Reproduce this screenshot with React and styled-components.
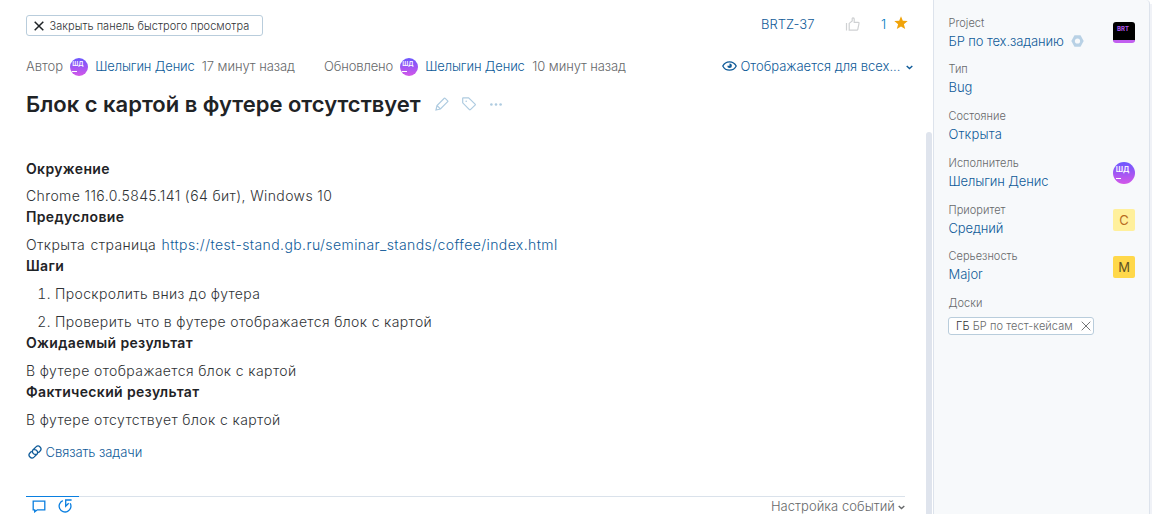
import React from "react";
import styled, { createGlobalStyle } from "styled-components";

const Global = createGlobalStyle`
  * { box-sizing: border-box; }
  body { margin: 0; background: #fff; font-family: Inter, "Liberation Sans", sans-serif; font-size: 13px; font-weight: 300; color: #66686a; overflow: hidden; }
  svg { display: block; flex: none; }
`;

const Page = styled.div`
  display: flex;
  width: 1152px;
  height: 514px;
  overflow: hidden;
`;
const Main = styled.main`
  width: 926px;
  padding: 15px 0 0 26px;
  display: flex;
  flex-direction: column;
`;
const Track = styled.div`
  width: 7px;
  padding-top: 132px;
  display: flex;
`;
const Thumb = styled.div`
  width: 6px;
  border-radius: 3px 3px 0 0;
  background: #dfe4ed;
`;
const Text = styled.span`
  white-space: nowrap;
  line-height: 20px;
  font-size: ${(p) => p.$size || 13}px;
  letter-spacing: ${(p) => p.$ls || 0}px;
  color: ${(p) => p.$color || "#66686a"};
  margin-left: ${(p) => p.$ml || 0}px;
`;
const Link = styled.a`
  white-space: nowrap;
  line-height: 20px;
  font-size: ${(p) => p.$size || 13}px;
  letter-spacing: ${(p) => p.$ls || 0}px;
  color: #0f5b99;
  text-decoration: none;
  margin-left: ${(p) => p.$ml || 0}px;
`;
const TopRow = styled.div`
  display: flex;
  height: 21px;
  align-items: flex-start;
`;
const CloseButton = styled.button`
  display: flex;
  align-items: center;
  width: 237px;
  height: 21px;
  padding: 0 0 0 7px;
  border: 1px solid #b9cddc;
  border-radius: 3px;
  background: #fff;
  font-family: inherit;
  font-weight: inherit;
`;
const TopActions = styled.div`
  display: flex;
  align-items: center;
  height: 18px;
  margin-left: 498px;
`;
const IssueId = styled.div`
  width: 84px;
`;
const MetaRow = styled.div`
  display: flex;
  align-items: center;
  height: 20px;
  margin-top: 20px;
`;
const Person = styled.div`
  display: flex;
  align-items: center;
  width: ${(p) => p.$w}px;
`;
const Visibility = styled.div`
  display: flex;
  align-items: center;
  margin-left: auto;
  width: 204px;
`;
const Avatar = styled.span`
  flex: none;
  display: flex;
  flex-direction: column;
  width: ${(p) => p.$size}px;
  height: ${(p) => p.$size}px;
  border-radius: 50%;
  overflow: hidden;
  background: linear-gradient(#6b57ff, #d457e8);
  color: #fff;
  font-weight: 600;
  font-size: ${(p) => p.$size * 0.34}px;
  line-height: 1;
  padding: ${(p) => p.$size * 0.18}px 0 0 ${(p) => p.$size * 0.12}px;
  margin-left: ${(p) => p.$ml || 0}px;
  margin-top: ${(p) => p.$mt || 0}px;
  &::after {
    content: "";
    width: ${(p) => p.$size * 0.24}px;
    height: 1px;
    margin-top: ${(p) => p.$size * 0.22}px;
    background: #fff;
  }
`;
const TitleRow = styled.div`
  display: flex;
  align-items: center;
  height: 28px;
  margin-top: 14px;
`;
const Title = styled.h1`
  margin: 0;
  width: 409px;
  font-size: 22px;
  line-height: 28px;
  font-weight: 600;
  letter-spacing: -0.01px;
  color: #1f2326;
  white-space: nowrap;
`;
const Description = styled.article`
  margin-top: 40px;
  font-size: 14px;
  line-height: 21px;
  letter-spacing: 0.39px;
  color: #303336;
  a { color: #0f5b99; letter-spacing: 0.41px; }
`;
const Heading = styled.h2`
  margin: 0;
  font-size: 14px;
  line-height: 21px;
  font-weight: 600;
  letter-spacing: 0.35px;
  color: #1f2326;
`;
const Para = styled.p`
  margin: ${(p) => (p.$first ? 6 : 7)}px 0 0;
  word-spacing: ${(p) => p.$ws || 0}px;
`;
const Steps = styled.ol`
  margin: 0;
  padding: 0 0 0 29px;
  li { margin-top: 7px; letter-spacing: 0.36px; }
`;
const LinkIssues = styled.div`
  display: flex;
  align-items: center;
  height: 20px;
  margin: 12px 0 0 2px;
`;
const Activity = styled.div`
  display: flex;
  width: 879px;
  height: 18px;
  margin-top: 34px;
  border-top: 1px solid #dae2eb;
`;
const ActivityTabs = styled.div`
  display: flex;
  gap: 12px;
  width: 53px;
  height: 18px;
  margin-top: -1px;
  padding: 2px 0 0 6px;
  border-top: 1px solid #0a7fe0;
`;
const EventSettings = styled.div`
  display: flex;
  align-items: center;
  justify-content: flex-end;
  margin-left: auto;
  height: 17px;
`;
const Sidebar = styled.aside`
  width: 217px;
  padding: 13px 14px 0 14px;
  background: #f7f9fb;
  border-left: 1px solid #dde3ec;
  border-right: 1px solid #dde3ec;
  border-top-right-radius: 4px;
`;
const Edge = styled.div`
  width: 2px;
  margin-top: 4px;
  background: #f0f2f7;
`;
const Field = styled.div`
  display: flex;
  justify-content: space-between;
  height: ${(p) => p.$h || 47}px;
`;
const FieldBody = styled.div`
  display: flex;
  flex-direction: column;
  padding-left: 0.5px;
`;
const FieldLabel = styled.span`
  font-size: 11px;
  line-height: 20px;
  height: 18px;
  white-space: nowrap;
  letter-spacing: 0.03px;
`;
const FieldValue = styled.div`
  display: flex;
  align-items: center;
  height: 20px;
`;
const Tile = styled.span`
  width: 22px;
  height: 22px;
  margin-top: ${(p) => p.$mt}px;
  border-radius: 2px;
  font-size: 13px;
  font-weight: 400;
  line-height: 22px;
  text-align: center;
  background: ${(p) => p.$bg};
  color: ${(p) => p.$color};
`;
const Logo = styled.span`
  width: 22px;
  height: 21px;
  margin-top: 9px;
  padding: 4px 0 0 4px;
  border-radius: 3px;
  background: #000;
  border-bottom: 3px solid #c25ff0;
  color: #b45cf0;
  font-size: 6px;
  font-weight: 700;
  line-height: 6px;
`;
const Chip = styled.div`
  display: flex;
  align-items: center;
  width: 146px;
  height: 18px;
  margin: 6px 0 0 -0.5px;
  padding: 0 4px 0 7px;
  border: 1px solid #b9cddc;
  border-radius: 3px;
  background: #fff;
  ${Text} { line-height: 16px; }
`;

const Cross = ({ size, color, w }) => (
  <svg width={size} height={size} viewBox="0 0 10 10" stroke={color} strokeWidth={w} fill="none"><path d="M.7.7l8.6 8.6M9.3.7L.7 9.3" /></svg>
);
const IconBox = styled.span`
  display: flex;
  margin-left: ${(p) => p.$ml || 0}px;
  margin-top: ${(p) => p.$mt || 0}px;
`;
const Caret = ({ color, ml }) => (
  <IconBox $ml={ml} $mt={3}>
    <svg width="7" height="5" viewBox="0 0 7 5" stroke={color} strokeWidth="1.4" fill="none"><path d="M.7.9l2.800 2.600L6.300.9" /></svg>
  </IconBox>
);

const fields = [
  { label: "Тип", value: "Bug", h: 47 },
  { label: "Состояние", value: "Открыта", h: 47, ls: 0.15 },
  { label: "Исполнитель", value: "Шелыгин Денис", h: 47, ls: -0.12, avatar: true },
  { label: "Приоритет", value: "Средний", h: 46, ls: -0.1, mark: "С", mt: 9, bg: "#fff09c", color: "#b86b1f" },
  { label: "Серьезность", value: "Major", h: 47, mark: "M", mt: 10, bg: "#ffd84a", color: "#5e5326" },
];

export default function App() {
  return (
    <Page>
      <Global />
      <Main>
        <TopRow>
          <CloseButton>
            <Cross size={10} color="#1f2326" w={1.5} />
            <Text $size={11} $ml={5.5} $ls={0.04} $color="#303336">Закрыть панель быстрого просмотра</Text>
          </CloseButton>
          <TopActions>
            <IssueId><Link>BRTZ-37</Link></IssueId>
            <IconBox>
              <svg width="15" height="14" viewBox="0 0 15 14" stroke="#cfd1d3" strokeWidth="1.2" fill="none"><path d="M1.500 6v7.500M4.200 6.400L7.200 4V1.400c0-.9 2-.9 2 .6v3.400h4c.7 0 1 .5.8 1l-1.200 6c-.1.500-.4.800-.9.800H4.200z" /></svg>
            </IconBox>
            <Text $ml={21} $color="#0079c0">1</Text>
            <IconBox $ml={8} $mt={-2}>
              <svg width="14" height="14" viewBox="0 0 14 14" fill="#f0a30a"><path d="M7 .2l1.800 4.600 4.900.3-3.800 3.100 1.300 4.900L7 10.400l-4.200 2.700 1.300-4.900L.3 5.100l4.900-.3z" /></svg>
            </IconBox>
          </TopActions>
        </TopRow>

        <MetaRow>
          <Person $w={298}>
            <Text>Автор</Text>
            <Avatar $size={18} $ml={7} $mt={1}>ШД</Avatar>
            <Link $ml={7} $ls={-0.14}>Шелыгин Денис</Link>
            <Text $ml={7} $ls={-0.06}>17 минут назад</Text>
          </Person>
          <Person $w={310}>
            <Text $ls={-0.12}>Обновлено</Text>
            <Avatar $size={18} $ml={7} $mt={1}>ШД</Avatar>
            <Link $ml={7} $ls={-0.14}>Шелыгин Денис</Link>
            <Text $ml={7.5} $ls={-0.08}>10 минут назад</Text>
          </Person>
          <Visibility>
            <svg width="15" height="10" viewBox="0 0 15 10" fill="none" stroke="#0f5b99" strokeWidth="1.3"><path d="M.8 5C2.200 2.200 4.600.8 7.500.8S12.800 2.200 14.200 5c-1.400 2.800-3.800 4.200-6.700 4.200S2.200 7.800.8 5z" /><path d="M7.500 2.500v2.200H5.300A2.300 2.300 0 1 0 7.500 2.500z" fill="#0f5b99" stroke="none" /></svg>
            <Link $ml={3.5}>Отображается для всех...</Link>
            <Caret color="#0f5b99" ml={6} />
          </Visibility>
        </MetaRow>

        <TitleRow>
          <Title>Блок с картой в футере отсутствует</Title>
          <svg width="14" height="14" viewBox="0 0 14 14" fill="none" stroke="#aecbe0" strokeWidth="1.200"><path d="M1 13l1-4.500L9.300 1.300c.3-.3.600-.3.900 0l2.500 2.500c.3.300.3.600 0 .9L5.400 12z M2.200 8.600l3.100 3.200" /></svg>
          <IconBox $ml={13}>
            <svg width="14" height="14" viewBox="0 0 14 14" fill="none" stroke="#aecbe0" strokeWidth="1.200"><path d="M.7 1.200v4.600l6.700 6.900c.3.300.7.300 1 0l4.700-4.600c.3-.3.300-.7 0-1L6.600.900H1z" /><circle cx="4.200" cy="4.200" r=".8" fill="#aecbe0" stroke="none" /></svg>
          </IconBox>
          <IconBox $ml={13.5}>
            <svg width="12" height="3" viewBox="0 0 12 3" fill="#aecbe0"><circle cx="1.400" cy="1.500" r="1.300" /><circle cx="6" cy="1.500" r="1.300" /><circle cx="10.600" cy="1.500" r="1.300" /></svg>
          </IconBox>
        </TitleRow>

        <Description>
          <Heading>Окружение</Heading>
          <Para $first>Chrome 116.0.5845.141 (64 бит), Windows 10</Para>
          <Heading>Предусловие</Heading>
          <Para $ws={1}>Открыта страница <a>https://test-stand.gb.ru/seminar_stands/coffee/index.html</a></Para>
          <Heading>Шаги</Heading>
          <Steps>
            <li>Проскролить вниз до футера</li>
            <li>Проверить что в футере отображается блок с картой</li>
          </Steps>
          <Heading>Ожидаемый результат</Heading>
          <Para>В футере отображается блок с картой</Para>
          <Heading>Фактический результат</Heading>
          <Para>В футере отсутствует блок с картой</Para>
        </Description>

        <LinkIssues>
          <svg width="14" height="14" viewBox="0 0 14 14" fill="none" stroke="#0f5b99" strokeWidth="1.300"><path d="M8.200 9.300A3 3 0 0 1 4.700 5.200L8 1.900a2.900 2.900 0 0 1 4.100 4.100L10.400 7.700M5.800 4.700A3 3 0 0 1 9.300 8.800L6 12.100A2.900 2.900 0 0 1 1.900 8L3.600 6.300" /></svg>
          <Link $ml={3.5} $ls={-0.05}>Связать задачи</Link>
        </LinkIssues>

        <Activity>
          <ActivityTabs>
            <svg width="14" height="14" viewBox="0 0 14 14" fill="none" stroke="#0a7fe0" strokeWidth="1.300"><path d="M1.200 2.200h11.600v8.600H5.400l-2.700 2v-2H1.200z" /></svg>
            <svg width="15" height="14" viewBox="0 0 15 14" fill="none" stroke="#0a7fe0" strokeWidth="1.300"><path d="M4.800 1.600A5.900 5.900 0 1 0 12.200 4.200M13.600 1H7.700v6.200L10.700 4.200" /></svg>
          </ActivityTabs>
          <EventSettings>
            <Text $ls={0.04}>Настройка событий</Text>
            <Caret color="#66686a" ml={3} />
          </EventSettings>
        </Activity>
      </Main>
      <Track><Thumb /></Track>
      <Sidebar>
        <Field $h={46}>
          <FieldBody>
            <FieldLabel>Project</FieldLabel>
            <FieldValue>
              <Link $ls={-0.1}>БР по тех.заданию</Link>
              <IconBox $ml={7}>
                <svg width="13" height="12" viewBox="0 0 13 12"><path d="M3.500.3h6L12.700 6l-3.200 5.700h-6L.3 6z" fill="#b8d1e5" /><circle cx="6.500" cy="6" r="2.600" fill="#f7f9fb" /></svg>
              </IconBox>
            </FieldValue>
          </FieldBody>
          <Logo>BRT</Logo>
        </Field>
        {fields.map((f) => (
          <Field key={f.label} $h={f.h}>
            <FieldBody>
              <FieldLabel>{f.label}</FieldLabel>
              <FieldValue><Link $ls={f.ls}>{f.value}</Link></FieldValue>
            </FieldBody>
            {f.avatar && <Avatar $size={22} $mt={9}>ШД</Avatar>}
            {f.bg && <Tile $bg={f.bg} $color={f.color} $mt={f.mt}>{f.mark}</Tile>}
          </Field>
        ))}
        <FieldBody>
          <FieldLabel>Доски</FieldLabel>
          <Chip>
            <Text $size={11} $ls={0.08} $color="#303336">ГБ&nbsp;</Text>
            <Text $size={11} $ls={0.08}>БР по тест-кейсам</Text>
            <IconBox $ml={8}><Cross size={10} color="#737577" w={1} /></IconBox>
          </Chip>
        </FieldBody>
      </Sidebar>
      <Edge />
    </Page>
  );
}
